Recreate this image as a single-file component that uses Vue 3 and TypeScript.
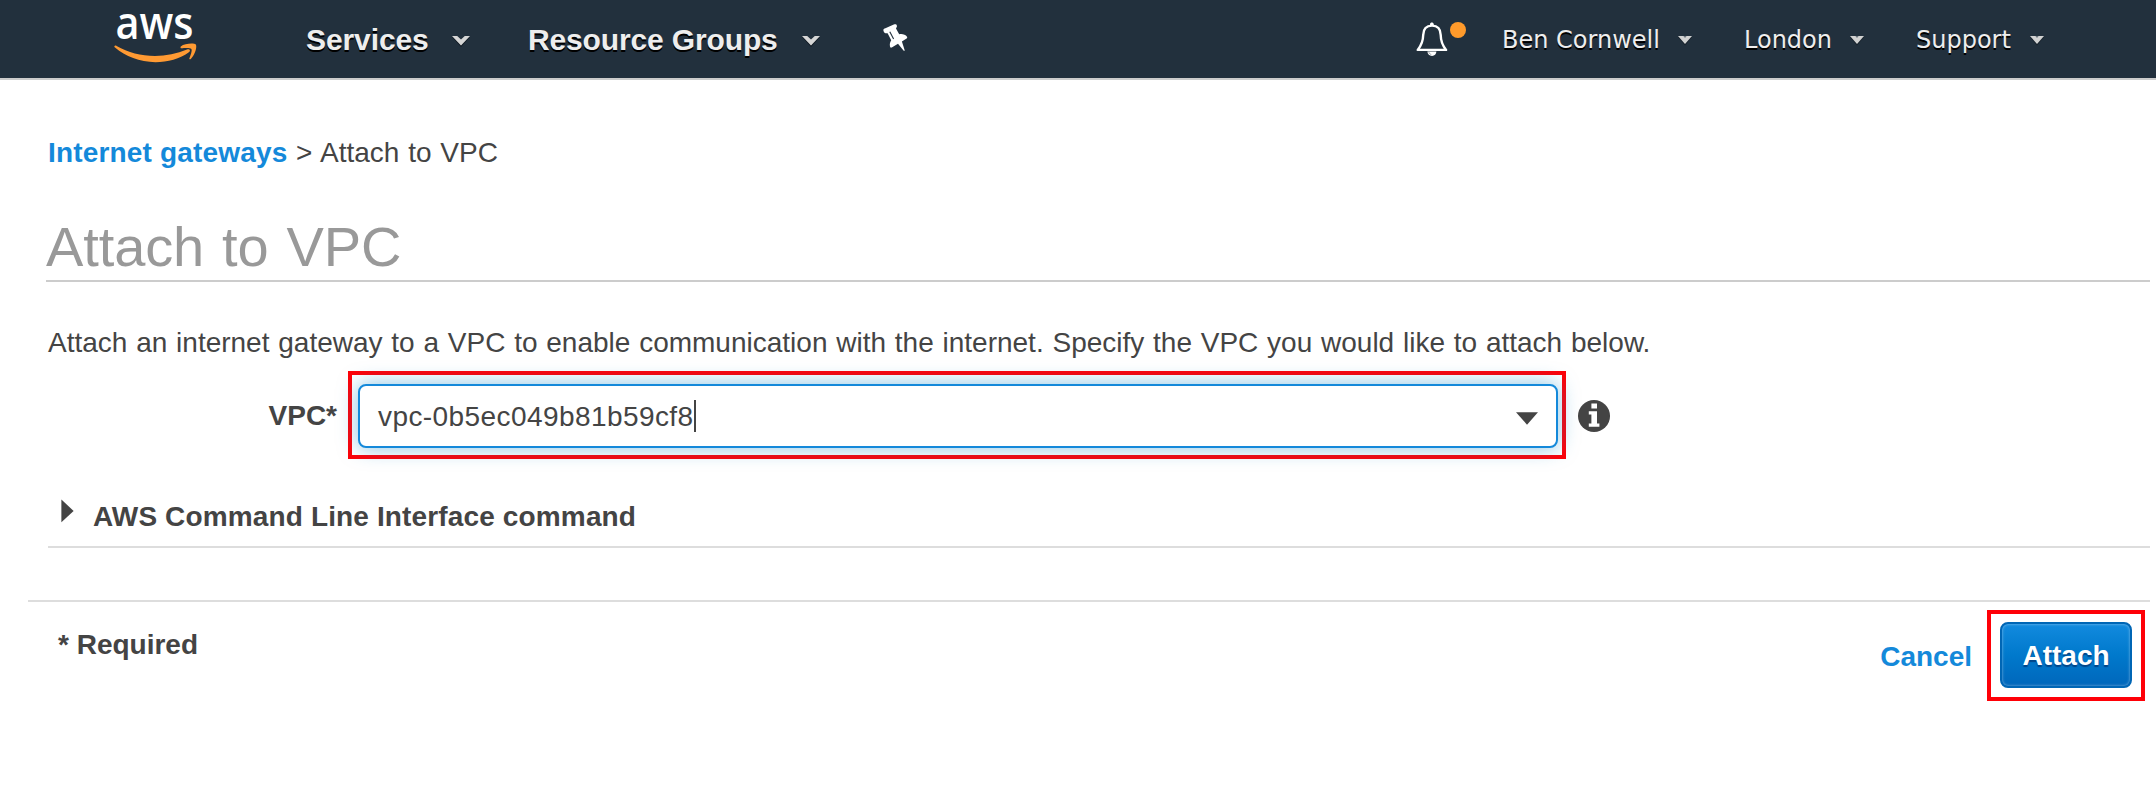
<script setup lang="ts">
import { ref } from 'vue'

interface NavItem {
  label: string
  cls: string
}

const mainMenus: NavItem[] = [
  { label: 'Services', cls: 'services' },
  { label: 'Resource Groups', cls: 'groups' },
]
const accountMenus: NavItem[] = [
  { label: 'Ben Cornwell', cls: 'user' },
  { label: 'London', cls: 'region' },
  { label: 'Support', cls: 'support' },
]
const vpcId = ref<string>('vpc-0b5ec049b81b59cf8')
</script>

<template>
  <div class="page">
    <header class="topbar">
      <svg class="logo" width="84" height="54" viewBox="0 0 84 54">
        <text class="logo-text" x="1.5" y="28.6" textLength="78" lengthAdjust="spacingAndGlyphs">aws</text>
        <path
          d="M0.3 36.6C0.6 35.6 1.6 35.3 2.6 36C14 42.6 27 45.9 41 45.9C52 45.9 63 43.6 73 39.4C75.4 38.5 77 40.5 75.2 42C66 49 53.5 52.2 41.5 52.2C25.5 52.2 11.5 46.4 1 37.6C0.5 37.2 0.2 36.9 0.3 36.6Z"
          fill="#ff9a33"
        />
        <path
          d="M66.8 36.4C70.6 33.4 80.2 32.8 81.8 34.6C83.2 36.4 81.4 44.6 76.8 48.9C76 49.6 75 49.2 75.4 48.3C76.5 45.7 78.4 40.4 77.4 39C76.3 37.6 70.4 38 67.6 38.3C66.6 38.4 66.1 37 66.8 36.4Z"
          fill="#ff9a33"
        />
      </svg>
      <nav class="primary">
        <div v-for="m in mainMenus" :key="m.label" class="menu" :class="m.cls">
          <span>{{ m.label }}</span>
          <svg width="18" height="12" viewBox="0 0 18 12">
            <path d="M0 1H5L9 5L13 1H18L9 11Z" fill="#111a23" />
            <path d="M0 0H5.2L9 3.6L12.8 0H18L9 9.6Z" fill="#d6d6d6" />
          </svg>
        </div>
      </nav>
      <svg class="pin" width="26" height="28" viewBox="0 0 26 28">
        <path
          d="M0.4 6.4C0.2 5 1.2 4.6 2.4 4.2L10.8 0.6C12.4 0 13.6.3 13.9 1.8C14.1 3.2 13.3 3.6 13 4.4L16.2 10.2C18.6 9.6 22.6 10.2 24 12.8C24.4 13.6 24.2 14.3 23.6 14.6L18.9 17.4L21.6 26C21.8 27.1 21 27.3 20.5 26.6L15 19.8L9.2 23.2C8 24 7.1 23.7 7 22.6C6.5 20 7 18 8.2 16.2L4.6 9.2C2.6 9.6 0.8 9 0.4 6.4Z"
          fill="#fff"
        />
        <path d="M6.8 7.8L10.6 15" stroke="#22303d" stroke-width="1.1" />
      </svg>
      <div class="bell">
        <svg width="32" height="36" viewBox="0 0 32 36">
          <path
            d="M16 3.6C9.8 3.6 7.3 7.6 7.2 13C7.1 20 5.2 23.6 1.7 27.9H30.1C26.6 23.6 24.8 20 24.7 13C24.6 7.6 22.2 3.6 16 3.6Z"
            fill="none"
            stroke="#fff"
            stroke-width="2.4"
            stroke-linejoin="round"
          />
          <path d="M14 3.4V2.2C14-.1 17.7-.1 17.7 2.2V3.4Z" fill="#fff" />
          <path d="M11.4 29.6H20.4C20.2 32.2 18.6 34 16 34C13.4 34 11.6 32.2 11.4 29.6Z" fill="#fff" />
          <path d="M12.6 29.8Q13.2 32 15.4 32.7" fill="none" stroke="#8b939b" stroke-width="0.8" />
        </svg>
        <i class="dot"></i>
      </div>
      <nav class="account">
        <div v-for="m in accountMenus" :key="m.label" class="menu small" :class="m.cls">
          <span>{{ m.label }}</span>
          <svg width="14" height="10" viewBox="0 0 14 10">
            <path d="M0 1H14L7 9.4Z" fill="#17202a" />
            <path d="M0 0H14L7 8Z" fill="#d2d2d2" />
            <path d="M5.4 0H8.6L7 2Z" fill="#68727c" />
          </svg>
        </div>
      </nav>
    </header>

    <main>
      <div class="crumbs">
        <a class="crumb-link">Internet gateways</a><span class="sep">&gt;</span><span class="here">Attach to VPC</span>
      </div>
      <h1><span>Attach to VPC</span></h1>
      <p class="desc">
        Attach an internet gateway to a VPC to enable communication with the internet. Specify the VPC you would like
        to attach below.
      </p>

      <div class="field">
        <label>VPC*</label>
        <div class="mark select-mark">
          <div class="select">
            <span class="value">{{ vpcId }}</span><i class="caret"></i>
            <svg class="arrow" width="22" height="13" viewBox="0 0 22 13">
              <path d="M0 0.3H22L11 12.7Z" fill="#444" />
            </svg>
          </div>
        </div>
        <svg class="info" width="32" height="32" viewBox="0 0 32 32">
          <circle cx="16" cy="16" r="16" fill="#444" />
          <path d="M13.4 3.6H19V8.4H13.4ZM10.8 11.2H19V23.4H21.4V26.8H10.8V23.4H13.4V14.6H10.8Z" fill="#fff" />
        </svg>
      </div>

      <div class="cli">
        <svg width="13" height="24" viewBox="0 0 13 24">
          <path d="M0.4 0.4L12.6 12L0.4 23.2Z" fill="#444" />
        </svg>
        <span>AWS Command Line Interface command</span>
      </div>
    </main>

    <footer>
      <span class="required">* Required</span>
      <a class="cancel">Cancel</a>
      <div class="mark attach-mark">
        <button type="button"><span>Attach</span></button>
      </div>
    </footer>
  </div>
</template>

<style>
body {
  margin: 0;
  background: #fff;
}
</style>

<style scoped>
.page {
  width: 2156px;
  height: 808px;
  overflow: hidden;
  background: #fff;
  color: #444;
  font: 28px/36px 'Liberation Sans', Arial, sans-serif;
}
svg {
  display: block;
  flex: none;
}
.topbar {
  box-sizing: border-box;
  display: flex;
  height: 80px;
  background: #22303d;
  border-bottom: 2px solid #ccc;
}
.logo {
  margin: 10px 0 0 114px;
  overflow: visible;
}
.logo-text {
  font: 600 45px 'Open Sans', 'Noto Sans', sans-serif;
  fill: #fff;
}
.primary,
.account {
  display: flex;
}
.menu {
  display: flex;
  justify-content: space-between;
  height: 78px;
  color: #eee;
  font-size: 30px;
  font-weight: bold;
  line-height: 80px;
  white-space: nowrap;
  text-shadow: 0 2px 0 #000;
}
.menu svg {
  margin-top: 36px;
}
.services {
  width: 164px;
  margin-left: 108px;
  letter-spacing: -0.1px;
}
.groups {
  width: 292px;
  margin-left: 58px;
  letter-spacing: -0.14px;
}
.pin {
  margin: 24px 0 0 63px;
}
.bell {
  display: flex;
  width: 50px;
  margin: 22px 0 0 507px;
}
.dot {
  width: 16px;
  height: 16px;
  margin-left: 2px;
  border-radius: 50%;
  background: #ff9a2b;
}
.small {
  font: 24px/80px 'DejaVu Sans', Verdana, sans-serif;
}
.user {
  width: 190px;
  margin-left: 36px;
}
.region {
  width: 120px;
  margin-left: 52px;
}
.support {
  width: 128px;
  margin-left: 52px;
}
main {
  padding: 55px 6px 0 48px;
}
.crumbs {
  display: flex;
  height: 36px;
}
.crumb-link,
.cancel {
  color: #1489da;
  font-weight: bold;
}
.crumb-link {
  width: 248px;
  letter-spacing: 0.18px;
}
.sep {
  width: 24px;
}
.here {
  word-spacing: 1px;
}
h1 {
  box-sizing: border-box;
  height: 68px;
  margin: 43px 0 0 -2px;
  border-bottom: 2px solid #ccc;
  color: #999;
  font-size: 56px;
  font-weight: normal;
  letter-spacing: -0.1px;
  line-height: 65px;
  word-spacing: 2.5px;
}
.desc {
  margin: 43px 0 0;
  white-space: nowrap;
  word-spacing: 1px;
}
.field {
  display: flex;
  align-items: center;
  height: 88px;
  margin-top: 10px;
}
label {
  width: 289px;
  margin-right: 11px;
  padding-top: 2px;
  text-align: right;
  font-weight: bold;
}
.mark {
  box-sizing: border-box;
  border: 4px solid #ff0007;
}
.select-mark {
  width: 1218px;
  height: 88px;
  padding: 9px 4px 0 6px;
}
.select {
  box-sizing: border-box;
  display: flex;
  align-items: center;
  height: 64px;
  padding: 0 18px;
  border: 2px solid #1489da;
  border-radius: 8px;
  background: #fff;
  box-shadow: 0 0 20px rgba(20, 137, 200, 0.5);
}
.value {
  padding-top: 2px;
  letter-spacing: 0.42px;
}
.caret {
  width: 2px;
  height: 32px;
  background: #444;
}
.arrow {
  margin-left: auto;
  margin-top: 4px;
}
.info {
  margin: 1px 0 0 12px;
}
.cli {
  box-sizing: border-box;
  display: flex;
  height: 50px;
  margin-top: 39px;
  padding-left: 13px;
  border-bottom: 2px solid #ddd;
  font-weight: bold;
  letter-spacing: 0.14px;
}
.cli svg {
  margin: 1px 19px 0 0;
}
.cli span {
  padding-top: 1px;
}
footer {
  display: flex;
  margin: 52px 6px 0 28px;
  border-top: 2px solid #ddd;
  font-weight: bold;
}
.required {
  margin: 25px auto 0 30px;
}
.cancel {
  margin: 37px 15px 0 0;
}
.attach-mark {
  width: 158px;
  height: 91px;
  margin: 8px 5px 0 0;
  padding: 8px 9px;
}
button {
  width: 132px;
  height: 66px;
  padding: 1px 0 0;
  border: 2px solid #0066b5;
  border-radius: 8px;
  background: linear-gradient(#128ade, #0079cc 50%, #0067bb);
  box-shadow: inset 0 0 3px rgba(255, 255, 255, 0.5);
  color: #fff;
  font: bold 28px/61px 'Liberation Sans', Arial, sans-serif;
  text-shadow: 0 2px 1px rgba(0, 50, 110, 0.7);
}
</style>
